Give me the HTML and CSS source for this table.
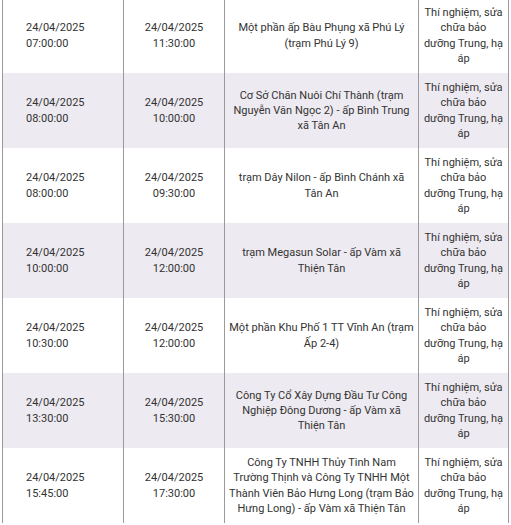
FILE: index.html
```html
<!DOCTYPE html>
<html lang="vi">
<head>
<meta charset="utf-8">
<link rel="stylesheet" href="styles.css">
</head>
<body>
<div class="wrap">
<table class="schedule">
  <colgroup>
    <col class="c1"><col class="c2"><col class="c3"><col class="c4">
  </colgroup>
  <tbody>
    <tr>
      <td class="start">24/04/2025<br>07:00:00</td>
      <td>24/04/2025<br>11:30:00</td>
      <td class="place">Một phần ấp Bàu Phụng xã Phú Lý (trạm Phú Lý 9)</td>
      <td class="work">Thí nghiệm, sửa<br>chữa bảo<br>dưỡng Trung, hạ<br>áp</td>
    </tr>
    <tr>
      <td class="start">24/04/2025<br>08:00:00</td>
      <td>24/04/2025<br>10:00:00</td>
      <td class="place">Cơ Sở Chăn Nuôi Chí Thành (trạm Nguyễn Văn Ngọc 2) - ấp Bình Trung xã Tân An</td>
      <td class="work">Thí nghiệm, sửa<br>chữa bảo<br>dưỡng Trung, hạ<br>áp</td>
    </tr>
    <tr>
      <td class="start">24/04/2025<br>08:00:00</td>
      <td>24/04/2025<br>09:30:00</td>
      <td class="place">trạm Dây Nilon - ấp Bình Chánh xã Tân An</td>
      <td class="work">Thí nghiệm, sửa<br>chữa bảo<br>dưỡng Trung, hạ<br>áp</td>
    </tr>
    <tr>
      <td class="start">24/04/2025<br>10:00:00</td>
      <td>24/04/2025<br>12:00:00</td>
      <td class="place">trạm Megasun Solar - ấp Vàm xã Thiện Tân</td>
      <td class="work">Thí nghiệm, sửa<br>chữa bảo<br>dưỡng Trung, hạ<br>áp</td>
    </tr>
    <tr>
      <td class="start">24/04/2025<br>10:30:00</td>
      <td>24/04/2025<br>12:00:00</td>
      <td class="place">Một phần Khu Phố 1 TT Vĩnh An (trạm Ấp 2-4)</td>
      <td class="work">Thí nghiệm, sửa<br>chữa bảo<br>dưỡng Trung, hạ<br>áp</td>
    </tr>
    <tr>
      <td class="start">24/04/2025<br>13:30:00</td>
      <td>24/04/2025<br>15:30:00</td>
      <td class="place">Công Ty Cổ Xây Dựng Đầu Tư Công Nghiệp Đông Dương - ấp Vàm xã Thiện Tân</td>
      <td class="work">Thí nghiệm, sửa<br>chữa bảo<br>dưỡng Trung, hạ<br>áp</td>
    </tr>
    <tr>
      <td class="start">24/04/2025<br>15:45:00</td>
      <td>24/04/2025<br>17:30:00</td>
      <td class="place">Công Ty TNHH Thủy Tinh Nam Trường Thịnh và Công Ty TNHH Một Thành Viên Bảo Hưng Long (trạm Bảo Hưng Long) - ấp Vàm xã Thiện Tân</td>
      <td class="work">Thí nghiệm, sửa<br>chữa bảo<br>dưỡng Trung, hạ<br>áp</td>
    </tr>
  </tbody>
</table>
</div>
</body>
</html>
```

FILE: styles.css
```css
html, body {
  margin: 0;
  padding: 0;
  background: #ffffff;
}

.wrap {
  padding-left: 2px;
  margin-top: -2px;
}

.schedule {
  border-collapse: collapse;
  table-layout: fixed;
  width: 506px;
  font-family: Roboto, "Noto Sans", sans-serif;
  font-size: 11px;
  line-height: 15.25px;
  color: #333333;
}

.c1 { width: 121px; }
.c2 { width: 101px; }
.c3 { width: 194px; }
.c4 { width: 90px; }

.schedule td {
  border-left: 1px solid #9a9a9a;
  border-right: 1px solid #9a9a9a;
  padding: 7px 8px;
  height: 61px;
  text-align: center;
  vertical-align: middle;
}

.schedule td.start {
  text-align: left;
  padding-left: 23px;
}

.schedule td.place {
  padding-left: 4px;
  padding-right: 4px;
}

.schedule td.work {
  padding-left: 2px;
  padding-right: 2px;
  white-space: nowrap;
}

.schedule tr:nth-child(even) td {
  background: #eeeaf1;
}
```
